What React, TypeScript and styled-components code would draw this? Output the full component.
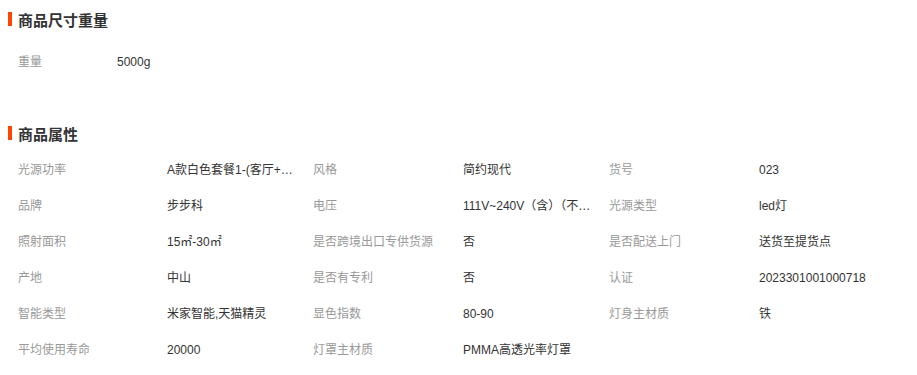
import React from "react";
import styled, { createGlobalStyle } from "styled-components";

const Global = createGlobalStyle`
  html, body { margin: 0; padding: 0; background: #fff; }
  body {
    font-family: "Liberation Sans", "Noto Sans CJK SC", sans-serif;
    font-size: 12px;
    color: #333;
  }
`;

const Page = styled.div`
  width: 917px;
  padding: 0 0 0 8px;
  box-sizing: border-box;
`;

const Section = styled.section<{ $gap?: number }>`
  margin-top: ${(p) => p.$gap ?? 0}px;
`;

const Title = styled.h3`
  margin: 0;
  height: 38px;
  display: flex;
  align-items: center;
  gap: 6px;
  font-size: 15px;
  font-weight: 700;
  color: #333;
  &::before {
    content: "";
    display: block;
    width: 4px;
    height: 14px;
    background: #ff4400;
  }
`;

const Grid = styled.div<{ $cols: string; $top?: number }>`
  display: grid;
  grid-template-columns: ${(p) => p.$cols};
  padding-left: 10px;
  padding-top: ${(p) => p.$top ?? 0}px;
`;

const Label = styled.div`
  height: 36px;
  line-height: 36px;
  color: #999;
  white-space: nowrap;
`;

const Value = styled.div`
  height: 36px;
  line-height: 36px;
  color: #333;
  max-width: 130px;
  white-space: nowrap;
  overflow: hidden;
  text-overflow: ellipsis;
`;

const sizeRows: [string, string][] = [["重量", "5000g"]];

const attrs: [string, string][] = [
  ["光源功率", "A款白色套餐1-(客厅+餐厅+卧室)"],
  ["风格", "简约现代"],
  ["货号", "023"],
  ["品牌", "步步科"],
  ["电压", "111V~240V（含）（不含）"],
  ["光源类型", "led灯"],
  ["照射面积", "15㎡-30㎡"],
  ["是否跨境出口专供货源", "否"],
  ["是否配送上门", "送货至提货点"],
  ["产地", "中山"],
  ["是否有专利", "否"],
  ["认证", "2023301001000718"],
  ["智能类型", "米家智能,天猫精灵"],
  ["显色指数", "80-90"],
  ["灯身主材质", "铁"],
  ["平均使用寿命", "20000"],
  ["灯罩主材质", "PMMA高透光率灯罩"],
];

export default function App() {
  return (
    <Page>
      <Global />
      <Section>
        <Title>商品尺寸重量</Title>
        <Grid $cols="99px 200px" $top={6}>
          {sizeRows.map(([k, v]) => (
            <React.Fragment key={k}>
              <Label>{k}</Label>
              <Value>{v}</Value>
            </React.Fragment>
          ))}
        </Grid>
      </Section>
      <Section $gap={34}>
        <Title>商品属性</Title>
        <Grid $cols="149px 146px 150px 146px 150px 146px">
          {attrs.map(([k, v]) => (
            <React.Fragment key={k}>
              <Label>{k}</Label>
              <Value>{v}</Value>
            </React.Fragment>
          ))}
        </Grid>
      </Section>
    </Page>
  );
}
